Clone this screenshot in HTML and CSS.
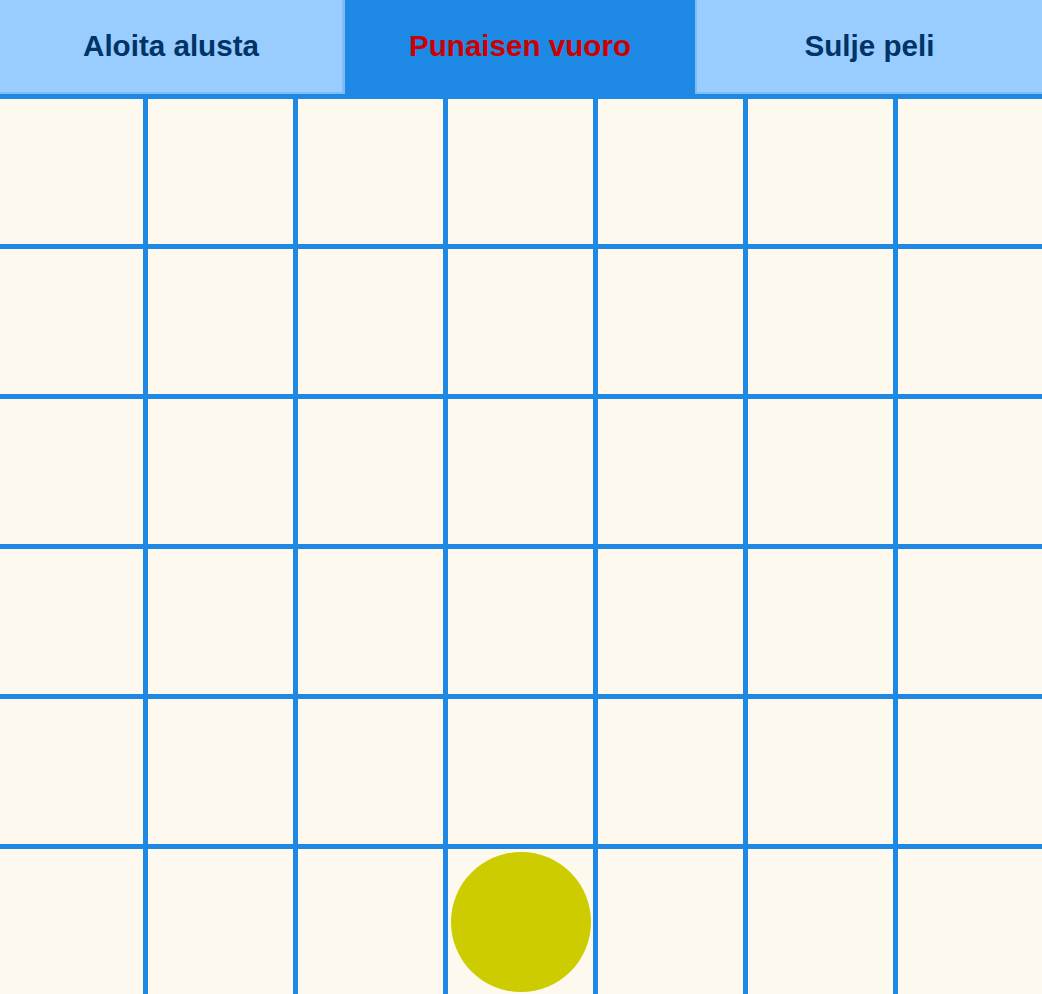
FILE: index.html
```html
<!DOCTYPE html>
<html lang="fi">
<head>
<meta charset="utf-8">
<title>Neljän suora</title>
<link rel="stylesheet" href="styles.css">
</head>
<body>
<div class="app">
  <header class="topbar">
    <button class="btn btn-left">Aloita alusta</button>
    <div class="status">Punaisen vuoro</div>
    <button class="btn btn-right">Sulje peli</button>
  </header>
  <main class="board-wrap">
    <div class="board">
      <div class="cell"></div><div class="cell"></div><div class="cell"></div><div class="cell"></div><div class="cell"></div><div class="cell"></div><div class="cell"></div>
      <div class="cell"></div><div class="cell"></div><div class="cell"></div><div class="cell"></div><div class="cell"></div><div class="cell"></div><div class="cell"></div>
      <div class="cell"></div><div class="cell"></div><div class="cell"></div><div class="cell"></div><div class="cell"></div><div class="cell"></div><div class="cell"></div>
      <div class="cell"></div><div class="cell"></div><div class="cell"></div><div class="cell"></div><div class="cell"></div><div class="cell"></div><div class="cell"></div>
      <div class="cell"></div><div class="cell"></div><div class="cell"></div><div class="cell"></div><div class="cell"></div><div class="cell"></div><div class="cell"></div>
      <div class="cell"></div><div class="cell"></div><div class="cell"></div><div class="cell"><span class="disc disc-yellow"></span></div><div class="cell"></div><div class="cell"></div><div class="cell"></div>
    </div>
  </main>
</div>
</body>
</html>
```
FILE: styles.css
```css
html, body {
  margin: 0;
  padding: 0;
  overflow: hidden;
  background: #fdf9ee;
}

.app {
  width: 1042px;
  height: 994px;
  overflow: hidden;
  font-family: "Liberation Sans", Arial, sans-serif;
}

.topbar {
  display: grid;
  grid-template-columns: 345px 1fr 347px;
  height: 94px;
  background: #1e88e5;
}

.btn {
  margin: 0;
  padding: 0;
  font-family: inherit;
  font-size: 29.6px;
  font-weight: bold;
  color: #003366;
  background: #99ccff;
  border: 0 solid #80bdf8;
  display: flex;
  align-items: center;
  justify-content: center;
  cursor: pointer;
}

.btn-left {
  border-right-width: 3px;
  border-bottom-width: 2px;
}

.btn-right {
  border-left-width: 2px;
  border-bottom-width: 2px;
}

.status {
  display: flex;
  align-items: center;
  justify-content: center;
  font-size: 29.6px;
  font-weight: bold;
  color: #cc0000;
  padding-bottom: 2px;
}

.board-wrap {
  background: #1e88e5;
  overflow: hidden;
  width: 1042px;
  height: 900px;
}

.board {
  display: grid;
  grid-template-columns: repeat(7, 145px);
  grid-auto-rows: 145px;
  gap: 5px;
  margin-left: -2px;
  padding-top: 5px;
  width: 1045px;
}

.cell {
  background: #fdf9ee;
  display: flex;
  align-items: center;
  justify-content: center;
}

.disc {
  display: block;
  width: 140px;
  height: 140px;
  border-radius: 50%;
}

.disc-yellow {
  background: #cccc00;
}
```
